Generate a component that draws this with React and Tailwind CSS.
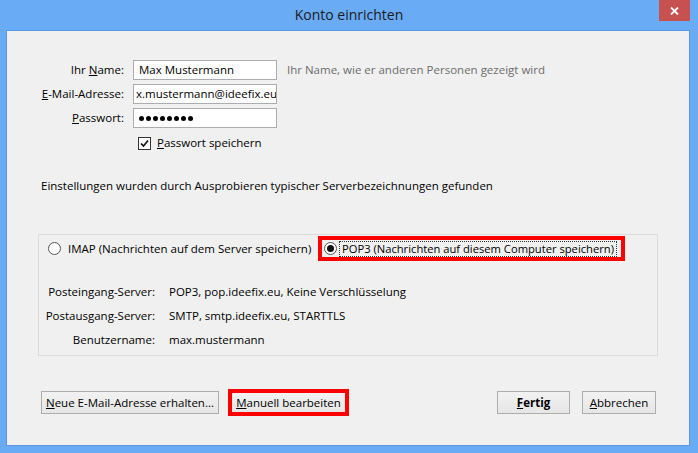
import React from 'react';

const font = { fontFamily: '"Open Sans", "Noto Sans", sans-serif' };

const Radio = ({ checked }) => (
  <span className="w-[13px] h-[13px] rounded-full border border-[#555] bg-white flex items-center justify-center shrink-0">
    {checked && <span className="w-[7px] h-[7px] rounded-full bg-[#111]"></span>}
  </span>
);

const Btn = ({ children, width, bold }) => (
  <button
    className={`h-[23px] ${width} border border-[#adadad] bg-linear-to-b from-[#f2f2f2] to-[#e6e6e6] text-[11.5px] text-black whitespace-nowrap ${bold ? 'font-bold' : ''}`}
  >
    {children}
  </button>
);

const App = () => {
  return (
    <div className="w-[698px] h-[453px] bg-[#6aabf5] flex flex-col overflow-hidden" style={font}>
      {/* title bar */}
      <div className="relative h-[30px] flex items-center justify-center shrink-0">
        <span className="text-[14px] text-[#1a1a1a] pb-[1px]">Konto einrichten</span>
        <div className="absolute top-0 right-[8px] w-[31px] h-[21px] bg-[#c75050] flex items-center justify-center">
          <svg width="9" height="8" viewBox="0 0 9 8">
            <path d="M1 0.5 L8 7.5 M8 0.5 L1 7.5" stroke="#fff" strokeWidth="1.8" />
          </svg>
        </div>
      </div>

      {/* client area */}
      <div className="ml-[6px] w-[684px] h-[416px] border border-[#5b97df] bg-[#f0f0f0] text-[11.5px] text-black">
        <div className="pt-[29px] grid grid-cols-[117px_144px_1fr] gap-y-[4px] items-center">
          <span className="text-right whitespace-nowrap">Ihr <u>N</u>ame:</span>
          <div className="ml-[9px] h-[20px] w-[144px] border border-[#abadb3] bg-white flex items-center px-[5px]">Max Mustermann</div>
          <span className="ml-[19px] text-[#6d6d6d] whitespace-nowrap">Ihr Name, wie er anderen Personen gezeigt wird</span>

          <span className="text-right whitespace-nowrap"><u>E</u>-Mail-Adresse:</span>
          <div className="ml-[9px] h-[20px] w-[144px] border border-[#abadb3] bg-white flex items-center pl-[2px] overflow-hidden whitespace-nowrap">x.mustermann@ideefix.eu</div>
          <span></span>

          <span className="text-right whitespace-nowrap"><u>P</u>asswort:</span>
          <div className="ml-[9px] h-[20px] w-[144px] border border-[#abadb3] bg-white flex items-center gap-[2px] pl-[5px]">
            {Array.from({ length: 8 }).map((_, i) => (
              <span key={i} className="w-[5px] h-[5px] rounded-full bg-black"></span>
            ))}
          </div>
          <span></span>
        </div>

        <div className="mt-[8px] ml-[131px] flex items-center gap-[6px] h-[14px]">
          <span className="w-[13px] h-[13px] border border-[#333] bg-white flex items-center justify-center">
            <svg width="9" height="9" viewBox="0 0 9 9">
              <path d="M1 4.5 L3.5 7 L8 1.5" stroke="#111" strokeWidth="1.7" fill="none" />
            </svg>
          </span>
          <span><u>P</u>asswort speichern</span>
        </div>

        <div className="mt-[28px] ml-[34px] h-[16px] flex items-center whitespace-nowrap">
          Einstellungen wurden durch Ausprobieren typischer Serverbezeichnungen gefunden
        </div>

        {/* group box */}
        <div className="mt-[40px] ml-[31px] w-[620px] h-[122px] border border-[#dcdcdc]">
          <div className="mt-[1px] flex items-center">
            <div className="w-[279px] pl-[9px] flex items-center gap-[7px] whitespace-nowrap">
              <Radio />
              <span>IMAP (Nachrichten auf dem Server speichern)</span>
            </div>
            <div className="w-[307px] h-[25px] border-[4px] border-[#ff0000] flex items-center pl-[2px] whitespace-nowrap overflow-hidden">
              <Radio checked />
              <span className="ml-[2px] border border-dotted border-[#333] px-[2px] leading-[14px] text-[11.2px]">POP3 (Nachrichten auf diesem Computer speichern)</span>
            </div>
          </div>

          <div className="mt-[22px] grid grid-cols-[116px_1fr] gap-y-[8px] items-center">
            <span className="text-right h-[16px] whitespace-nowrap">Posteingang-Server:</span>
            <span className="ml-[14px] h-[16px]">POP3, pop.ideefix.eu, Keine Verschlüsselung</span>
            <span className="text-right h-[16px] whitespace-nowrap">Postausgang-Server:</span>
            <span className="ml-[14px] h-[16px]">SMTP, smtp.ideefix.eu, STARTTLS</span>
            <span className="text-right h-[16px] whitespace-nowrap">Benutzername:</span>
            <span className="ml-[14px] h-[16px]">max.mustermann</span>
          </div>
        </div>

        {/* buttons */}
        <div className="mt-[33px] ml-[34px] mr-[33px] flex items-center">
          <Btn width="w-[178px]"><u>N</u>eue E-Mail-Adresse erhalten...</Btn>
          <div className="ml-[9px] w-[121px] h-[27px] border-[4px] border-[#ff0000] bg-linear-to-b from-[#f2f2f2] to-[#e6e6e6] flex items-center justify-center whitespace-nowrap">
            <span><u>M</u>anuell bearbeiten</span>
          </div>
          <div className="flex-1"></div>
          <Btn width="w-[73px]" bold><u>F</u>ertig</Btn>
          <div className="w-[12px]"></div>
          <Btn width="w-[74px]"><u>A</u>bbrechen</Btn>
        </div>
      </div>
    </div>
  );
};

export default App;
